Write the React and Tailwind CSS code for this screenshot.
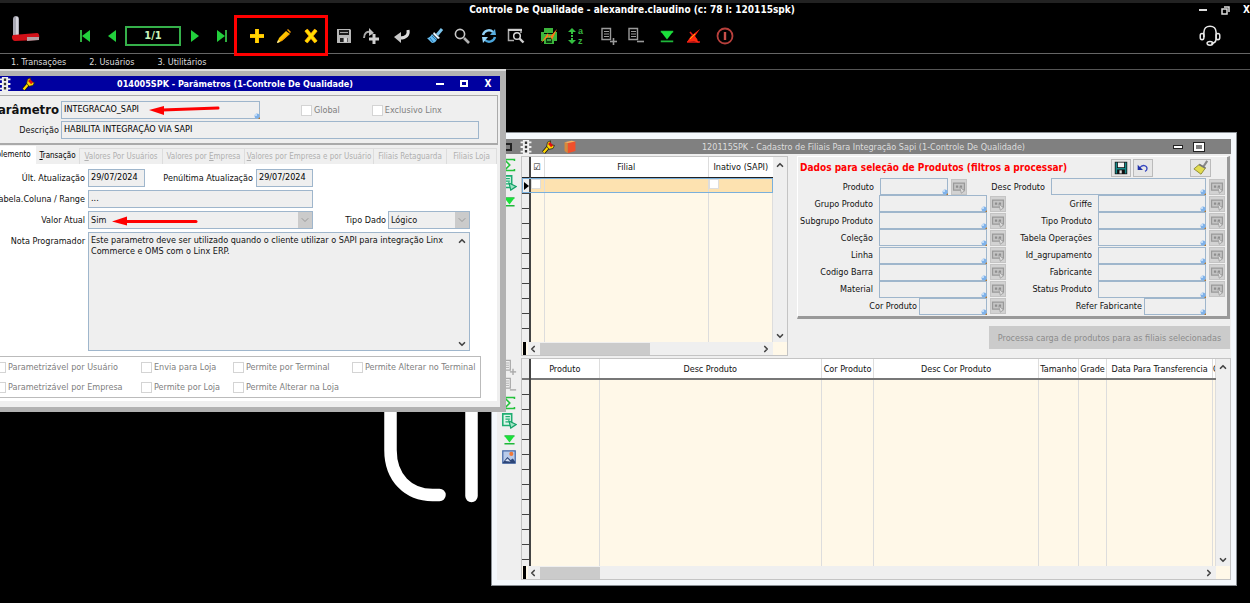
import React from 'react';
import { ChevronUp, ChevronDown, ChevronLeft, ChevronRight } from 'lucide-react';

/* ---------- icons ---------- */

const Svg = ({ size = 18, children, ...rest }) => (
  <svg width={size} height={size} viewBox="0 0 18 18" fill="none" aria-hidden="true" {...rest}>
    {children}
  </svg>
);

const FirstIcon = () => (
  <Svg><path d="M5 3v12" stroke="#2fae3f" strokeWidth="2" /><path d="M14 3v12L6 9z" fill="#22d03c" /></Svg>
);
const PrevIcon = () => <Svg><path d="M13 3v12L5 9z" fill="#22d03c" /></Svg>;
const NextIcon = () => <Svg><path d="M5 3v12l8-6z" fill="#22d03c" /></Svg>;
const LastIcon = () => (
  <Svg><path d="M13 3v12" stroke="#2fae3f" strokeWidth="2" /><path d="M4 3v12l8-6z" fill="#22d03c" /></Svg>
);
const PlusIcon = () => (
  <Svg><path d="M9 2v14M2 9h14" stroke="#ff9d00" strokeWidth="4" /><path d="M9 2v14M2 9h14" stroke="#ffd800" strokeWidth="3" /></Svg>
);
const PencilIcon = () => (
  <Svg>
    <path d="M2 16l2-5 7-7 4 3-8 7z" fill="#ffc400" />
    <path d="M12 3l1-1 3 3-1 1z" fill="#ff9d00" />
    <path d="M2 16l1-3 2 2z" fill="#fff0a0" />
    <path d="M6 14l8-7" stroke="#ff9000" />
  </Svg>
);
const CrossIcon = () => (
  <Svg><path d="M4 3l10 12M14 3L4 15" stroke="#ff9d00" strokeWidth="4" /><path d="M4 3l10 12M14 3L4 15" stroke="#ffe000" strokeWidth="2.600" /></Svg>
);
const SaveIcon = () => (
  <Svg>
    <path d="M2 2h13l1 1v13H2z" fill="#b8b8b8" />
    <path d="M4 3h10v5H4z" fill="#1a1a1a" />
    <path d="M5 11h8v4H5z" fill="#222" />
    <path d="M9 11h3v4H9zM5 5.500h8" fill="#ddd" stroke="#ccc" strokeWidth=".8" />
  </Svg>
);
const RedoPlusIcon = () => (
  <Svg>
    <path d="M2 11c0-5 3-7 7-6" stroke="#a8a8a8" strokeWidth="2" />
    <path d="M7 1l5 5-5 3z" fill="#c4c4c4" />
    <path d="M12 7v10M7 12h10" stroke="#d0d0d0" strokeWidth="3" />
  </Svg>
);
const ReturnIcon = () => (
  <Svg>
    <path d="M15 3c1 5-2 8-8 8" stroke="#dcdcdc" strokeWidth="3" />
    <path d="M1 10l7-5v11z" fill="#c8c8c8" />
  </Svg>
);
const BrushIcon = () => (
  <Svg>
    <path d="M11 8l5-6" stroke="#7cc4ec" strokeWidth="3" />
    <path d="M8 5l6 6-2 1-5-5z" fill="#e8f6ff" />
    <path d="M6 7l5 5c-1 3-3 4-5 4l-5-5c2 0 4-2 5-4z" fill="#68bdf0" />
    <path d="M4 11l3 4M6 9l4 4" stroke="#2277b0" />
  </Svg>
);
const SearchIcon = () => (
  <Svg><circle cx="7" cy="7" r="4.600" stroke="#c8c8c8" strokeWidth="1.600" /><path d="M11 11l5 5" stroke="#b0b0b0" strokeWidth="2.600" /></Svg>
);
const RefreshIcon = () => (
  <Svg>
    <path d="M3 8a6 6 0 0 1 10-3" stroke="#8fd0f6" strokeWidth="2.400" />
    <path d="M10 8l6 0-1-6z" fill="#58aee0" />
    <path d="M15 10a6 6 0 0 1-10 3" stroke="#4ba6dc" strokeWidth="2.400" />
    <path d="M8 10H2l1 6z" fill="#9ad8fb" />
  </Svg>
);
const FindWindowIcon = () => (
  <Svg>
    <path d="M14 6V2.500H1.500v11H7" stroke="#aaa" strokeWidth="1.500" />
    <path d="M1 3h14" stroke="#ccc" strokeWidth="2" />
    <circle cx="10" cy="9" r="3.300" stroke="#d8d8d8" strokeWidth="1.500" />
    <path d="M12.500 11.500l4 4" stroke="#d0d0d0" strokeWidth="2.400" />
  </Svg>
);
const PrinterIcon = () => (
  <Svg>
    <path d="M4 1h9v5H4zM1 5h3v2h10V5h3v9h-3v3H4v-3H1z" fill="#3cb53c" />
    <path d="M6 11h6v5H6z" fill="#083d0c" />
    <path d="M7 13h4" stroke="#7dff7d" />
    <path d="M1 16l7-10 1 5 8-9-5 11-2-5z" fill="#ff7a1a" />
  </Svg>
);
const SortIcon = () => (
  <Svg>
    <path d="M5 1l4 4H6v2H4V5H1zM5 17l4-4H6v-2H4v2H1zM4 8h2v2H4z" fill="#34c040" />
    <text x="11" y="7" fontSize="9" fontWeight="bold" fill="#35b33f" fontFamily="Liberation Sans, sans-serif">a</text>
    <text x="11" y="17" fontSize="9" fontWeight="bold" fill="#35b33f" fontFamily="Liberation Sans, sans-serif">z</text>
  </Svg>
);
const DocIcon = ({ plus, color = '#9a9a9a' }) => (
  <Svg>
    <path d="M2 1.500h8.500v11H2z" stroke={color} strokeWidth="1.400" />
    <path d="M4 4.500h5M4 7h5M4 9.500h5" stroke={color} />
    <path d="M10 14.500h7" stroke={color} strokeWidth="1.600" />
    {plus && <path d="M13.500 11v7" stroke={color} strokeWidth="1.600" />}
  </Svg>
);
const DownBarIcon = ({ size }) => (
  <Svg size={size}><path d="M2 4h14M2 15h14" stroke="#1fb83a" strokeWidth="2" /><path d="M2 4h14l-7 9z" fill="#1be03a" /></Svg>
);
const RedCancelIcon = () => (
  <Svg>
    <path d="M2 15h13M5 5l7 8" stroke="#e01818" strokeWidth="1.600" />
    <path d="M2 15l4-6 9-7-5 7 4 7-5-2z" fill="#ff2a10" />
    <path d="M5 12l5-5" stroke="#ffb000" />
  </Svg>
);
const PowerIcon = () => (
  <Svg><circle cx="9" cy="9" r="7.500" stroke="#b8403c" strokeWidth="1.800" /><path d="M9 5v8" stroke="#c8504a" strokeWidth="2.400" /></Svg>
);
const HeadsetIcon = () => (
  <Svg size={22}>
    <path d="M4 10V6c0-3 2-5 5-5s5 2 5 5v5c0 3-2 4-4 4" stroke="#e8e8e8" strokeWidth="1.300" />
    <rect x="1" y="7" width="3" height="5" rx="1.500" stroke="#e8e8e8" strokeWidth="1.200" />
    <rect x="14" y="7" width="3" height="5" rx="1.500" stroke="#e8e8e8" strokeWidth="1.200" />
    <ellipse cx="9" cy="15" rx="2.400" ry="1.500" stroke="#e8e8e8" strokeWidth="1.200" />
  </Svg>
);
const TrafficIcon = () => (
  <Svg size={14}>
    <path d="M5 0h8v18H5z" fill="#f0f0f0" />
    <path d="M2 3h14M2 9h14M2 15h14" stroke="#f0f0f0" strokeWidth="2.400" />
    <path d="M7.500 2h3v3h-3zM7.500 7.500h3v3h-3zM7.500 13h3v3h-3z" fill="#333" />
  </Svg>
);
const WrenchIcon = () => (
  <Svg size={14}>
    <path d="M2 16l7-8" stroke="#111" strokeWidth="5" />
    <path d="M2 16l7-8" stroke="#ffd800" strokeWidth="3" />
    <path d="M7 3l4-2v5l5 1-2 4-5 1-3-4z" fill="#ffd800" stroke="#222" />
    <path d="M9 4l4 4" stroke="#e01010" strokeWidth="3.600" />
  </Svg>
);
const BookIcon = () => (
  <Svg size={14}>
    <path d="M6 4l10-2v12L6 17z" fill="#f0502c" />
    <path d="M2 3l4 1v13l-4-3z" fill="#d98a3a" />
    <path d="M2 3l9-2 5 1-10 2z" fill="#ffb060" />
  </Svg>
);
const SigmaIcon = () => (
  <Svg size={14}><path d="M16 4V2H3l7 7-7 7h13v-2" stroke="#24c23c" strokeWidth="2" /></Svg>
);
const ExportIcon = () => (
  <Svg size={16}>
    <path d="M2 1h10v13H2z" fill="#dff5ea" stroke="#1fae72" strokeWidth="1.800" />
    <path d="M5 4h5M5 7h5M5 10h4" stroke="#1fae72" strokeWidth="1.400" />
    <path d="M9 9l8 4-6 4z" fill="#9fe3c4" stroke="#16a268" strokeWidth="1.400" />
  </Svg>
);
const PictureIcon = () => (
  <Svg size={14}>
    <path d="M1 1h16v16H1z" fill="#b9cbea" stroke="#4468a8" strokeWidth="1.600" />
    <path d="M1 16l6-7 4 4 3-2 3 4v2H1z" fill="#2c4578" />
    <path d="M4 14l3-3 4 4z" fill="#d5dff2" />
    <circle cx="12" cy="5" r="2.600" fill="#f07838" />
  </Svg>
);
const LookupIcon = () => (
  <Svg size={14}>
    <path d="M2 4h14v9H2z" fill="#c4c4c4" stroke="#999" strokeWidth="1.600" />
    <path d="M5 7h3v3H5zM10 7h3v3h-3z" fill="#8e8e8e" />
    <path d="M10 9l6 5-4 3z" fill="#ddd" stroke="#999" />
  </Svg>
);

/* ---------- small parts ---------- */

const ToolButton = ({ label, children }) => (
  <button type="button" aria-label={label} className="flex w-[27px] h-6 items-center justify-center">
    {children}
  </button>
);

const WindowButtons = ({ close, light }) => (
  <div className={light ? 'flex items-center gap-3 text-white' : 'flex items-center gap-[9px] text-white'}>
    <button type="button" aria-label="Minimizar" className="flex w-3 h-3 items-center justify-center">
      <span className={light ? 'block w-2 h-[2px] bg-white' : 'block w-[10px] h-1 border border-[#222] bg-white'}></span>
    </button>
    <button type="button" aria-label="Maximizar" className="flex w-3 h-3 items-center justify-center">
      <span className={light ? 'block w-2 h-[7px] border-2 border-white' : 'block w-[10px] h-2 border-2 border-white outline outline-[#222]'}></span>
    </button>
    {close && (
      <button type="button" aria-label="Fechar" className="w-3 h-3 text-[10px] leading-3 font-bold">X</button>
    )}
  </div>
);

const LookupDot = () => (
  <svg width="6" height="6" viewBox="0 0 6 6" className="absolute right-0 bottom-0" aria-hidden="true">
    <path d="M3 3l3 3" stroke="#b07830" strokeWidth="1.500" />
    <circle cx="3" cy="3" r="2.500" fill="#7fb2ea" />
    <circle cx="2" cy="2" r="1" fill="#d6e8fb" />
  </svg>
);

const Field = ({ id, value = '', lookup, className = '' }) => (
  <span className={'relative block min-w-0 ' + className}>
    <input
      id={id}
      type="text"
      defaultValue={value}
      className="block w-full h-full px-[2px] pb-[2px] bg-[#efefef] border border-[#9fb6cc] text-black outline-none"
    />
    {lookup && <LookupDot />}
  </span>
);

const Select = ({ id, value, className }) => (
  <span className={'relative block ' + className}>
    <select id={id} className="block w-full h-full px-[2px] appearance-none bg-[#efefef] border border-[#9fb6cc] outline-none">
      <option>{value}</option>
    </select>
    <span className="absolute top-px right-px bottom-px w-[14px] flex items-center justify-center bg-[#cbcbcb] text-[#999] pointer-events-none">
      <ChevronDown size={12} />
    </span>
  </span>
);

const Check = ({ label, className = '' }) => (
  <label className={'flex items-center gap-[2px] text-[#808080] whitespace-nowrap ' + className}>
    <input type="checkbox" className="appearance-none w-[11px] h-[11px] bg-white border border-[#d4d4d4]" />
    {label}
  </label>
);

const HScroll = ({ thumb }) => (
  <div className="flex h-[13px] shrink-0 items-center bg-[#efefef] text-[#444]">
    <ChevronLeft size={10} strokeWidth={4} className="mr-[2px]" />
    <div className={'h-3 bg-[#cbcbcb] ' + thumb}></div>
    <ChevronRight size={10} strokeWidth={4} className="ml-auto mr-[2px]" />
  </div>
);

const VScroll = () => (
  <div className="flex w-[14px] shrink-0 flex-col items-center justify-between bg-[#efefef] text-[#444] pt-[3px] pb-px">
    <ChevronUp size={10} strokeWidth={4} />
    <ChevronDown size={10} strokeWidth={4} />
  </div>
);

/* ---------- main bar ---------- */

const Logo = () => (
  <svg width="30" height="28" viewBox="0 0 30 28" className="self-start -mt-1 ml-3 shrink-0" aria-hidden="true">
    <path d="M1 4c0-4 6-4 6 0v17H1z" fill="#a9a9b4" />
    <path d="M5 2v18" stroke="#d4d4dc" strokeWidth="2" />
    <path d="M1 20l24-2c3 0 3 7 0 7l-22 1c-3 0-4-5-2-6z" fill="#d01018" />
    <path d="M15 22h12v3l-12 1z" fill="#b4a0a4" />
  </svg>
);

const TopBar = () => (
  <header className="bg-black text-white">
    <div className="h-[3px] bg-[#222]"></div>
    <div className="flex h-[14px] items-center">
      <h1 className="flex-1 pl-[67px] text-center text-[10px] leading-3 font-bold">
        Controle De Qualidade - alexandre.claudino (c: 78 l: 120115spk)
      </h1>
      <div className="flex w-[53px] items-center justify-between pl-[2px]">
        <button type="button" aria-label="Minimizar" className="flex h-3 w-2 items-center"><span className="block w-2 h-[2px] bg-[#ddd]"></span></button>
        <button type="button" aria-label="Restaurar" className="block">
          <svg width="9" height="9" viewBox="0 0 9 9" fill="none" stroke="#ddd" strokeWidth="1.500">
            <path d="M1 3h5v5H1zM3 1h5v5" />
          </svg>
        </button>
        <button type="button" aria-label="Fechar" className="text-[10px] leading-3 font-bold">X</button>
      </div>
    </div>
    <div className="flex h-[37px] items-center border-b border-[#666] pt-[2px]">
      <Logo />
      <div className="flex ml-[29px]">
        <ToolButton label="Primeiro"><FirstIcon /></ToolButton>
        <ToolButton label="Anterior"><PrevIcon /></ToolButton>
      </div>
      <output className="w-14 h-5 border-2 border-[#35b04a] text-center text-[11px] leading-4 font-bold text-[#c9f5bd]">1/1</output>
      <div className="flex">
        <ToolButton label="Próximo"><NextIcon /></ToolButton>
        <ToolButton label="Último"><LastIcon /></ToolButton>
      </div>
      <div className="relative flex ml-2">
        <ToolButton label="Incluir"><PlusIcon /></ToolButton>
        <ToolButton label="Alterar"><PencilIcon /></ToolButton>
        <ToolButton label="Excluir"><CrossIcon /></ToolButton>
        <span className="absolute -left-[9px] -right-1 -top-[9px] -bottom-2 border-3 border-[#ff0000] pointer-events-none"></span>
      </div>
      <div className="flex ml-1.5">
        <ToolButton label="Salvar"><SaveIcon /></ToolButton>
        <ToolButton label="Salvar e incluir"><RedoPlusIcon /></ToolButton>
      </div>
      <div className="flex ml-1">
        <ToolButton label="Cancelar"><ReturnIcon /></ToolButton>
      </div>
      <div className="flex ml-1.5">
        <ToolButton label="Limpar"><BrushIcon /></ToolButton>
        <ToolButton label="Pesquisar"><SearchIcon /></ToolButton>
        <ToolButton label="Atualizar"><RefreshIcon /></ToolButton>
        <ToolButton label="Consulta"><FindWindowIcon /></ToolButton>
      </div>
      <div className="flex ml-1.5">
        <ToolButton label="Imprimir"><PrinterIcon /></ToolButton>
        <ToolButton label="Ordenar"><SortIcon /></ToolButton>
      </div>
      <div className="flex ml-1.5">
        <ToolButton label="Incluir item"><DocIcon plus /></ToolButton>
        <ToolButton label="Excluir item"><DocIcon /></ToolButton>
      </div>
      <div className="flex ml-1">
        <ToolButton label="Expandir"><DownBarIcon size={16} /></ToolButton>
        <ToolButton label="Descartar"><RedCancelIcon /></ToolButton>
      </div>
      <div className="flex ml-1">
        <ToolButton label="Sair"><PowerIcon /></ToolButton>
      </div>
      <div className="flex ml-auto mr-[27px]">
        <ToolButton label="Suporte"><HeadsetIcon /></ToolButton>
      </div>
    </div>
    <nav className="flex h-4 items-center border-b border-[#555] pl-[11px] gap-[23px] text-[9px] leading-3 text-[#ddd]">
      <a href="#">1. Transações</a>
      <a href="#">2. Usuários</a>
      <a href="#">3. Utilitários</a>
    </nav>
  </header>
);

/* ---------- window: Parâmetros ---------- */

const tabs = [
  { before: '', key: 'V', after: 'alores Por Usuários', width: 'w-[83px]' },
  { before: 'Valores por ', key: 'E', after: 'mpresa', width: 'w-[82px]' },
  { before: '', key: 'V', after: 'alores por Empresa e por Usuário', width: 'w-[129px]' },
  { before: 'Filiais Retaguarda', key: '', after: '', width: 'w-[73px]' },
  { before: 'Filiais Loja', key: '', after: '', width: 'w-[50px]' },
];

const FormLabel = ({ htmlFor, children }) => (
  <label htmlFor={htmlFor} className="w-[108px] shrink-0 pr-[3px] text-right whitespace-nowrap">{children}</label>
);

const ParametersWindow = () => (
  <section className="absolute -left-5 -top-px w-[526px] border-t-2 border-[#ddd]">
    <div className="bg-[#efefef] border-t-5 border-r-6 border-b-5 border-[#b2b2b2]">
      <div className="flex h-[15px] items-center bg-[#0000a0] pl-[18px] pr-[6px] text-white">
        <TrafficIcon />
        <span className="ml-2.5"><WrenchIcon /></span>
        <h2 className="flex-1 text-center text-[9px] leading-3 font-bold">014005SPK - Parâmetros (1-Controle De Qualidade)</h2>
        <WindowButtons close light />
      </div>

      <div className="mt-1 mr-[2px] flex flex-col gap-[2px] border-t border-r border-b-2 border-[#aaa] pt-[5px] pb-[4px]">
        <div className="flex items-center">
          <label htmlFor="parametro" className="w-[81px] pr-[2px] text-right text-[13px] leading-4 font-bold">Parâmetro</label>
          <Field id="parametro" value="INTEGRACAO_SAPI" lookup className="w-[199px] h-[18px]" />
          <Check label="Global" className="ml-[41px]" />
          <Check label="Exclusivo Linx" className="ml-8" />
        </div>
        <div className="flex items-center">
          <label htmlFor="descricao" className="w-[81px] pr-[2px] text-right">Descrição</label>
          <Field id="descricao" value="HABILITA INTEGRAÇÃO VIA SAPI" className="w-[418px] h-[18px]" />
        </div>
      </div>

      <div role="tablist" className="flex h-[19px] mr-[2px] items-end text-[8px] leading-3 text-[#b0b0b0] whitespace-nowrap">
        <button type="button" role="tab" aria-selected="true" className="w-14 h-[18px] bg-white text-right pr-[6px] text-black">Complemento</button>
        <button type="button" role="tab" className="w-11 h-4 border-r border-[#ddd] text-black"><u>T</u>ransação</button>
        {tabs.map((t) => (
          <button key={t.key + t.after + t.before} type="button" role="tab" className={'h-4 border-r border-t border-[#ddd] ' + t.width}>
            {t.before}<u>{t.key}</u>{t.after}
          </button>
        ))}
      </div>

      <div className="mr-[3px] mb-1.5 bg-white pt-[5px] pb-[3px]">
        <div className="flex flex-col gap-[3px]">
          <div className="flex items-center">
            <FormLabel htmlFor="ult">Últ. Atualização</FormLabel>
            <Field id="ult" value="29/07/2024" className="w-[57px] h-[18px]" />
            <label htmlFor="penult" className="w-[111px] pr-[3px] text-right whitespace-nowrap">Penúltima Atualização</label>
            <Field id="penult" value="29/07/2024" className="w-[57px] h-[18px]" />
          </div>
          <div className="flex items-center">
            <FormLabel htmlFor="tabela">Tabela.Coluna / Range</FormLabel>
            <Field id="tabela" value="..." className="w-[225px] h-[18px]" />
          </div>
          <div className="flex items-center">
            <FormLabel htmlFor="valor">Valor Atual</FormLabel>
            <Select id="valor" value="Sim" className="w-[225px] h-[18px]" />
            <label htmlFor="tipo" className="w-[75px] pr-[2px] text-right">Tipo Dado</label>
            <Select id="tipo" value="Lógico" className="w-[82px] h-[18px]" />
          </div>
          <div className="flex items-start">
            <FormLabel htmlFor="nota"><span className="block pt-[3px]">Nota Programador</span></FormLabel>
            <div className="flex w-[382px] h-[119px] border border-[#9fb6cc] bg-[#efefef]">
              <textarea
                id="nota"
                className="flex-1 resize-none px-[2px] pt-[2px] leading-[11px] outline-none"
                defaultValue="Este parametro deve ser utilizado quando o cliente utilizar o SAPI para integração Linx Commerce e OMS com o Linx ERP."
              />
              <VScroll />
            </div>
          </div>
        </div>

        <div className="mt-[5px] ml-[14px] grid w-[487px] h-[42px] grid-cols-[146px_92px_119px_1fr] items-center border border-[#bbb]">
          <Check label="Parametrizável por Usuário" />
          <Check label="Envia para Loja" />
          <Check label="Permite por Terminal" />
          <Check label="Permite Alterar no Terminal" />
          <Check label="Parametrizável por Empresa" />
          <Check label="Permite por Loja" />
          <Check label="Permite Alterar na Loja" />
        </div>
      </div>
    </div>

    {/* callout arrows */}
    <svg className="absolute left-5 top-0 pointer-events-none" width="240" height="170" viewBox="0 0 240 170" aria-hidden="true">
      <path d="M162 39l56-2" stroke="#ff0000" strokeWidth="3" strokeLinecap="round" />
      <path d="M149 39l15-4v9z" fill="#ff0000" />
      <path d="M125 150.500h71" stroke="#ff0000" strokeWidth="3" strokeLinecap="round" />
      <path d="M112 150.500l15-5v9z" fill="#ff0000" />
    </svg>
  </section>
);

/* ---------- window: Cadastro de Filiais ---------- */

const branchRows = Array.from({ length: 10 }, (_, i) => i);
const productRows = Array.from({ length: 12 }, (_, i) => i);

const leftFilters = ['Grupo Produto', 'Subgrupo Produto', 'Coleção', 'Linha', 'Codigo Barra', 'Material'];
const rightFilters = ['Griffe', 'Tipo Produto', 'Tabela Operações', 'Id_agrupamento', 'Fabricante', 'Status Produto'];

const LookupButton = ({ label }) => (
  <button type="button" aria-label={'Buscar ' + label} className="ml-[3px] flex w-4 h-4 shrink-0 items-center justify-center bg-[#d2d2d2] border border-[#c4c4c4]">
    <LookupIcon />
  </button>
);

const Filter = ({ label, labelWidth, gap = 'pr-[6px]', button = true, className = '' }) => {
  const id = label.toLowerCase().replace(/\s/g, '-');
  return (
    <div className={'flex items-center ' + className}>
      <label htmlFor={id} className={'shrink-0 text-right whitespace-nowrap ' + labelWidth + ' ' + gap}>{label}</label>
      <Field id={id} lookup className="flex-1 h-[17px]" />
      {button ? <LookupButton label={label} /> : <span className="w-[19px] shrink-0"></span>}
    </div>
  );
};

const RowMark = ({ current }) => (
  <td className="p-0 bg-[#efefef] border-b border-r-2 border-[#444]">
    {current && (
      <svg width="5" height="8" viewBox="0 0 5 8" className="ml-[2px] block" aria-hidden="true"><path d="M0 0v8l5-4z" fill="#000" /></svg>
    )}
  </td>
);

const CellCheck = ({ label }) => (
  <input type="checkbox" aria-label={label} className="block appearance-none w-[10px] h-[10px] bg-white border border-[#ddd]" />
);

const BranchGrid = () => (
  <div className="flex w-[267px] shrink-0 flex-col border border-[#c4c4c4] bg-[#fff8e8]">
    <div className="flex flex-1 min-h-0">
      <div className="flex-1 min-w-0 overflow-hidden">
        <table className="w-full h-full table-fixed border-collapse">
          <colgroup>
            <col className="w-2" /><col className="w-[14px]" /><col /><col className="w-[64px]" />
          </colgroup>
          <thead>
            <tr className="h-[21px] border-b-2 border-[#222] bg-white">
              <th className="bg-[#efefef] border-r-2 border-[#444]"></th>
              <th className="p-0 font-normal">☑</th>
              <th className="p-0 border-x border-[#ddd] font-normal">Filial</th>
              <th className="p-0 font-normal whitespace-nowrap">Inativo (SAPI)</th>
            </tr>
          </thead>
          <tbody>
            {branchRows.map((i) => (
              <tr key={i} className={i === 0 ? 'h-[15px] bg-[#fde2b0] outline outline-[#7ab0dc] -outline-offset-1' : 'h-[15px]'}>
                <RowMark current={i === 0} />
                <td className="p-0 border-r border-[#ddd] align-top">{i === 0 && <CellCheck label="Selecionar filial" />}</td>
                <td className="p-0 border-r border-[#ddd]"></td>
                <td className="p-0 border-r border-[#ddd] align-top">{i === 0 && <CellCheck label="Inativo" />}</td>
              </tr>
            ))}
            <tr>
              <td className="p-0 bg-[#efefef] border-r-2 border-[#444]"></td>
              <td className="p-0 border-r border-[#ddd]"></td>
              <td className="p-0 border-r border-[#ddd]"></td>
              <td className="p-0 border-r border-[#ddd]"></td>
            </tr>
          </tbody>
        </table>
      </div>
      <VScroll />
    </div>
    <div className="flex h-[13px]">
      <span className="ml-px mr-[2px] w-[3px] bg-black"></span>
      <div className="flex-1"><HScroll thumb="w-[110px]" /></div>
      <span className="w-[14px]"></span>
    </div>
  </div>
);

const FilterPanel = () => (
  <fieldset className="flex-1 ml-[9px] mr-[1px] flex flex-col border-t border-l border-t-white border-l-white border-r-3 border-b-3 border-r-[#999] border-b-[#999] pl-[2px] pr-[2px] pb-px">
    <div className="flex h-[21px] items-center">
      <h3 className="text-[10px] leading-3 font-bold text-[#ff0000] whitespace-nowrap">Dados para seleção de Produtos (filtros a processar)</h3>
      <button type="button" aria-label="Salvar filtros" className="ml-auto flex w-5 h-[18px] items-center justify-center border border-[#bbb] bg-[#e6e6e6]">
        <Svg size={14}>
          <path d="M1 1h16v16H1z" fill="#111" />
          <path d="M5 2h8v6H5z" fill="#f4f4f4" />
          <path d="M2 2h2v14H2zM14 2h2v14h-2zM4 9h10v2H4z" fill="#148a8a" />
          <path d="M7 12h3v4H7z" fill="#ddd" />
        </Svg>
      </button>
      <button type="button" aria-label="Desfazer" className="ml-[2px] flex w-5 h-[18px] items-center justify-center border border-[#bbb] bg-[#e6e6e6]">
        <Svg size={12}><path d="M4 9c4-6 11-4 11 1 0 2-1 3-3 4" stroke="#3848c0" strokeWidth="2" /><path d="M1 4v8h8z" fill="#2030a8" /></Svg>
      </button>
      <button type="button" aria-label="Limpar filtros" className="ml-[37px] mr-[14px] flex w-[21px] h-[18px] items-center justify-center border border-[#bbb] bg-[#e6e6e6]">
        <Svg size={16}>
          <path d="M12 7l4-6" stroke="#888" strokeWidth="2.400" />
          <path d="M7 5l7 4-5 7-8-6z" fill="#e2dc50" stroke="#8a8630" />
          <path d="M7 5l7 4" stroke="#777" strokeWidth="2" />
        </Svg>
      </button>
    </div>
    <div className="grid flex-1 auto-rows-fr">
      <div className="flex">
        <Filter label="Produto" labelWidth="w-[80px]" className="w-[167px]" />
        <Filter label="Desc Produto" labelWidth="w-[84px]" className="flex-1" />
      </div>
      {leftFilters.map((left, i) => (
        <div key={left} className="flex">
          <Filter label={left} labelWidth="w-[79px]" className="w-[206px]" />
          <Filter label={rightFilters[i]} labelWidth="w-[92px]" className="flex-1" />
        </div>
      ))}
      <div className="flex">
        <Filter label="Cor Produto" labelWidth="w-[119px]" gap="pr-[2px]" className="w-[206px]" />
        <Filter label="Refer Fabricante" labelWidth="w-[138px]" gap="pr-[2px]" button={false} className="flex-1" />
      </div>
    </div>
  </fieldset>
);

const productColumns = ['Produto', 'Desc Produto', 'Cor Produto', 'Desc Cor Produto', 'Tamanho', 'Grade', 'Data Para Transferencia', 'C'];

const ProductGrid = () => (
  <div className="flex h-[222px] shrink-0 flex-col border border-[#c4c4c4] bg-[#fff8e8]">
    <div className="flex flex-1 min-h-0">
      <div className="flex-1 min-w-0 overflow-hidden">
        <table className="w-full h-full table-fixed border-collapse">
          <colgroup>
            <col className="w-2" /><col className="w-[69px]" /><col /><col className="w-[52px]" /><col className="w-[165px]" />
            <col className="w-[40px]" /><col className="w-[28px]" /><col className="w-[106px]" /><col className="w-[3px]" />
          </colgroup>
          <thead>
            <tr className="h-5 border-b-2 border-[#777] bg-white whitespace-nowrap">
              <th className="bg-[#efefef] border-r-2 border-[#444]"></th>
              {productColumns.map((h) => (
                <th key={h} className="p-0 border-r border-[#ddd] font-normal overflow-hidden">{h}</th>
              ))}
            </tr>
          </thead>
          <tbody>
            {productRows.map((i) => (
              <tr key={i} className="h-[15px]">
                <RowMark />
                {productColumns.map((h) => <td key={h} className="p-0 border-r border-[#ddd]"></td>)}
              </tr>
            ))}
            <tr>
              <td className="p-0 bg-[#efefef] border-r-2 border-[#444]"></td>
              {productColumns.map((h) => <td key={h} className="p-0 border-r border-[#ddd]"></td>)}
            </tr>
          </tbody>
        </table>
      </div>
      <VScroll />
    </div>
    <div className="flex h-[13px]">
      <span className="ml-px mr-[2px] w-[3px] bg-black"></span>
      <div className="flex-1"><HScroll thumb="w-[60px]" /></div>
      <span className="w-[14px]"></span>
    </div>
  </div>
);

const SideButton = ({ label, children }) => (
  <button type="button" aria-label={label} className="flex w-4 h-[18px] items-center justify-center">{children}</button>
);

const BranchesWindow = () => (
  <section className="absolute left-[491px] right-[13px] top-[62px] bottom-[17px] flex flex-col border border-[#8a8f94] bg-[#f4f8fc] p-[5px] pt-[6px]">
    <div className="flex h-[15px] shrink-0 items-center bg-[#808080] pl-[7px] pr-[26px] text-[#ddd]">
      <span className="w-2 h-2 border-2 border-[#222]"></span>
      <span className="ml-[7px]"><TrafficIcon /></span>
      <span className="ml-[9px]"><WrenchIcon /></span>
      <span className="ml-[7px]"><BookIcon /></span>
      <h2 className="flex-1 mr-[22px] text-center text-[9px] leading-3">120115SPK - Cadastro de Filiais Para Integração Sapi (1-Controle De Qualidade)</h2>
      <WindowButtons />
    </div>
    <div className="flex flex-1 min-h-0 bg-[#efefef]">
      <aside className="flex w-6 shrink-0 flex-col items-end pr-1 pt-[2px]">
        <SideButton label="Somar filiais"><SigmaIcon /></SideButton>
        <SideButton label="Exportar filiais"><ExportIcon /></SideButton>
        <SideButton label="Expandir filiais"><DownBarIcon size={13} /></SideButton>
        <div className="mt-auto flex flex-col pb-[114px]">
          <SideButton label="Incluir produto"><DocIcon plus color="#aaa" /></SideButton>
          <SideButton label="Excluir produto"><DocIcon color="#aaa" /></SideButton>
          <SideButton label="Somar produtos"><SigmaIcon /></SideButton>
          <SideButton label="Exportar produtos"><ExportIcon /></SideButton>
          <SideButton label="Expandir produtos"><DownBarIcon size={13} /></SideButton>
          <SideButton label="Imagem do produto"><PictureIcon /></SideButton>
        </div>
      </aside>
      <div className="flex flex-1 min-w-0 flex-col pt-[2px]">
        <div className="flex flex-1 min-h-0 mb-[2px]">
          <BranchGrid />
          <div className="flex flex-1 flex-col">
            <FilterPanel />
            <button type="button" className="mt-[7px] mb-[7px] mr-px h-[23px] w-[241px] self-end bg-[#cbcbcb] text-[#8c8c8c] whitespace-nowrap">
              Processa carga de produtos para as filiais selecionadas
            </button>
          </div>
        </div>
        <ProductGrid />
      </div>
    </div>
  </section>
);

/* ---------- page ---------- */

const App = () => {
  return (
    <div className="flex h-screen flex-col overflow-hidden bg-black font-['DejaVu_Sans_Condensed','DejaVu_Sans',sans-serif] text-[9px] leading-3 text-[#111]">
      <TopBar />
      <main className="relative flex-1">
        <svg className="absolute left-[380px] top-[330px]" width="110" height="110" viewBox="0 0 110 110" fill="none" aria-hidden="true">
          <path d="M10.500 0v50c0 28 18 45 42 45h7M91.500 0v96" stroke="#fff" strokeWidth="12.500" strokeLinecap="round" />
        </svg>
        <BranchesWindow />
        <ParametersWindow />
      </main>
    </div>
  );
};

export default App;
